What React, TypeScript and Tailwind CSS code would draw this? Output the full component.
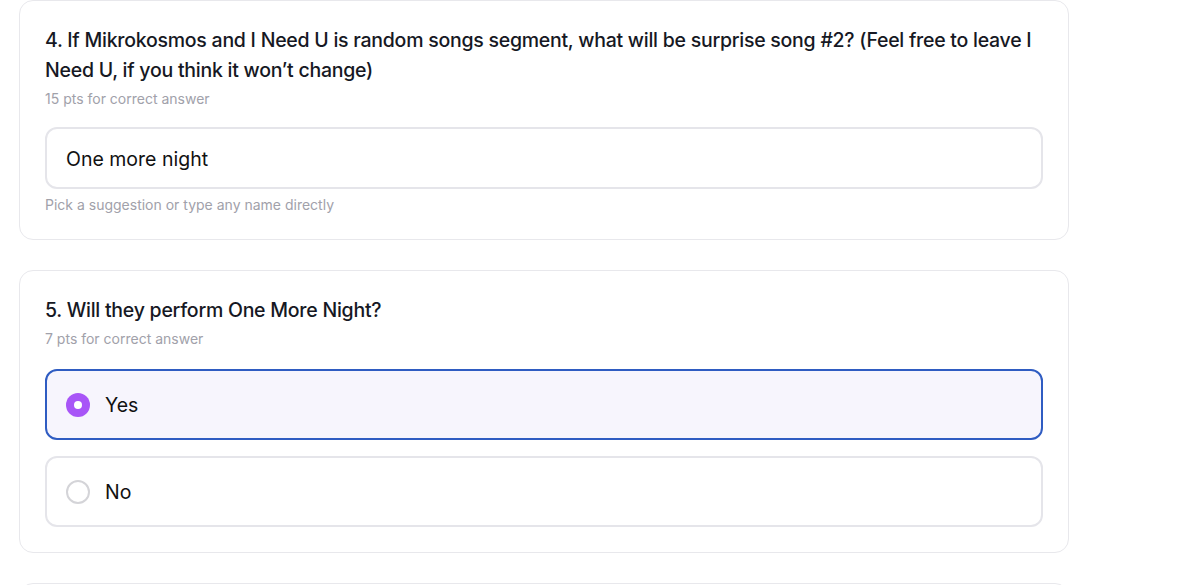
import React from "react";

function Radio({ checked }: { checked: boolean }) {
  return checked ? (
    <span className="flex h-6 w-6 shrink-0 items-center justify-center rounded-full bg-[#a855f7]">
      <span className="h-2 w-2 rounded-full bg-white" />
    </span>
  ) : (
    <span className="h-6 w-6 shrink-0 rounded-full border-2 border-[#d4d4d8] bg-white" />
  );
}

function Option({ label, checked }: { label: string; checked: boolean }) {
  return (
    <div
      className={
        "flex h-[71px] items-center gap-[15px] rounded-[12px] border-2 pl-[19px] " +
        (checked ? "border-[#2f5cc2] bg-[#f7f5fd]" : "border-[#e5e5ea] bg-white")
      }
    >
      <Radio checked={checked} />
      <span className="pt-[2px] text-[19.5px] text-[#111111]">{label}</span>
    </div>
  );
}

export default function App() {
  return (
    <div
      className="h-[585px] overflow-hidden bg-white pl-[19px] pr-[131px]"
      style={{ fontFamily: "Inter, 'Noto Sans', sans-serif" }}
    >
      <div className="flex flex-col gap-[30px]">
        <div className="rounded-[14px] border border-[#e8e8ec] px-[25px] pb-[24px] pt-[24px]">
          <h2 className="text-[19.5px] font-medium leading-[30px] tracking-[-0.25px] text-[#161823]">
            4. If Mikrokosmos and I Need U is random songs segment, what will be surprise song #2? (Feel free to leave I Need U, if you think it won’t change)
          </h2>
          <p className="mt-1 text-[14px] leading-5 text-[#a1a1aa]">15 pts for correct answer</p>
          <div className="mt-[18px] flex h-[62px] items-center rounded-[12px] border-2 border-[#e5e5ea] px-[19px] pt-[3px] text-[19.5px] text-[#111111]">
            One more night
          </div>
          <p className="mt-1.5 text-[14px] leading-5 text-[#a1a1aa]">Pick a suggestion or type any name directly</p>
        </div>

        <div className="rounded-[14px] border border-[#e8e8ec] px-[25px] pb-[25px] pt-[24px]">
          <h2 className="text-[19.5px] font-medium leading-[30px] tracking-[-0.25px] text-[#161823]">
            5. Will they perform One More Night?
          </h2>
          <p className="mt-1 text-[14px] leading-5 text-[#a1a1aa]">7 pts for correct answer</p>
          <div className="mt-5 flex flex-col gap-4">
            <Option label="Yes" checked={true} />
            <Option label="No" checked={false} />
          </div>
        </div>

        <div className="h-[40px] rounded-[14px] border border-[#e8e8ec]" />
      </div>
    </div>
  );
}
